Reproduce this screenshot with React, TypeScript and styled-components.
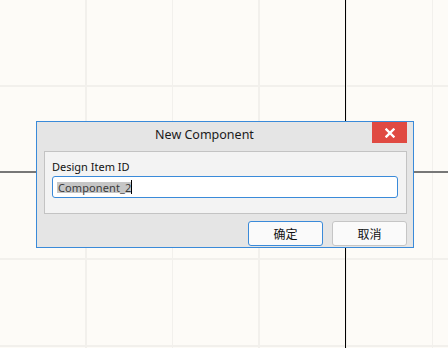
import React from "react";
import styled, { createGlobalStyle } from "styled-components";

const Global = createGlobalStyle`
  html, body { margin: 0; padding: 0; }
  body { font-family: "Noto Sans", "Noto Sans CJK SC", sans-serif; }
`;

const Canvas = styled.div`
  position: relative;
  width: 448px;
  height: 348px;
  overflow: hidden;
  background-color: #fdfbf7;
  background-image:
    linear-gradient(to right, transparent 345px, #000 345px, #000 346px, transparent 346px),
    linear-gradient(to bottom, transparent 171px, #777 171px, #777 173px, transparent 173px),
    repeating-linear-gradient(to right, transparent 0, transparent 85px, #f2f0ec 85px, #f2f0ec 86.67px),
    repeating-linear-gradient(to bottom, transparent 0, transparent 85px, #f2f0ec 85px, #f2f0ec 86.67px);
`;

const Window = styled.div`
  position: absolute;
  left: 36px;
  top: 121px;
  width: 376px;
  height: 125px;
  border: 1px solid #3a8ad9;
  background: #e5e5e5;
  display: flex;
  flex-direction: column;
`;

const TitleBar = styled.div`
  display: flex;
  height: 29px;
  align-items: flex-start;
  padding-right: 6px;
`;

const Title = styled.div`
  flex: 1;
  height: 25px;
  line-height: 25px;
  text-align: center;
  font-size: 12.5px;
  color: #1a1a1a;
`;

const CloseButton = styled.div`
  width: 35px;
  height: 21px;
  background: #e04a42;
  display: flex;
  align-items: center;
  justify-content: center;
`;

const Body = styled.div`
  padding: 0 6px 0 7px;
  display: flex;
  flex-direction: column;
  gap: 7px;
`;

const GroupBox = styled.div`
  height: 54px;
  border: 1px solid #c3c3c3;
  background: #f3f3f3;
  padding: 7px 8px 0 7px;
  display: flex;
  flex-direction: column;
  gap: 2px;
`;

const Label = styled.div`
  font-size: 11px;
  line-height: 15px;
  color: #111;
`;

const Input = styled.div`
  height: 20px;
  border: 1px solid #3a8ad9;
  border-radius: 3px;
  background: #fff;
  display: flex;
  align-items: center;
  padding-left: 4px;
`;

const Selected = styled.span`
  background: #c6c6c6;
  color: #3a3a3a;
  font-size: 11px;
  line-height: 11px;
  padding: 0 0 0 1px;
  height: 11px;
  display: inline-flex;
  align-items: center;
  letter-spacing: 0.1px;
`;

const Caret = styled.span`
  width: 1px;
  height: 14px;
  background: #000;
`;

const ButtonRow = styled.div`
  display: flex;
  justify-content: flex-end;
  gap: 9px;
`;

const Button = styled.div<{ $primary?: boolean }>`
  width: 73px;
  height: 23px;
  border: 1px solid ${(p) => (p.$primary ? "#3a8ad9" : "#c5c5c5")};
  border-radius: 3px;
  background: #fafafa;
  display: flex;
  align-items: center;
  justify-content: center;
  font-size: 12px;
  color: #111;
  font-family: "Noto Sans CJK SC", sans-serif;
`;

export default function App() {
  return (
    <>
      <Global />
      <Canvas>
        <Window>
          <TitleBar>
            <Title>New Component</Title>
            <CloseButton>
              <svg width="10" height="10" viewBox="0 0 10 10">
                <path d="M1.5 1.5 L8.5 8.5 M8.5 1.5 L1.5 8.5" stroke="#fff" strokeWidth="2.4" strokeLinecap="square" />
              </svg>
            </CloseButton>
          </TitleBar>
          <Body>
            <GroupBox>
              <Label>Design Item ID</Label>
              <Input>
                <Selected>Component_2</Selected>
                <Caret />
              </Input>
            </GroupBox>
            <ButtonRow>
              <Button $primary>确定</Button>
              <Button>取消</Button>
            </ButtonRow>
          </Body>
        </Window>
      </Canvas>
    </>
  );
}
